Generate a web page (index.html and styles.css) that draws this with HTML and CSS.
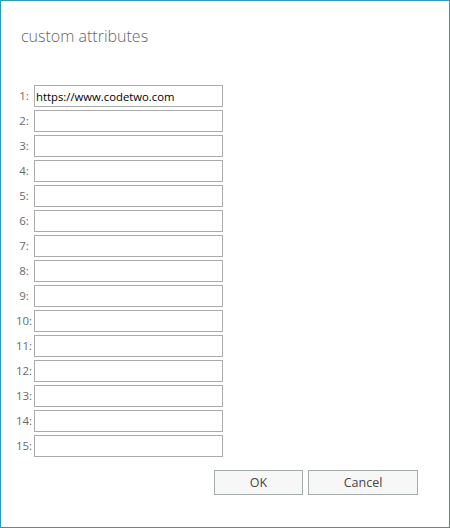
FILE: index.html
```html
<!DOCTYPE html>
<html>
<head>
<meta charset="utf-8">
<link rel="stylesheet" href="styles.css">
</head>
<body>
<div class="dialog">
  <h1 class="title">custom attributes</h1>
  <div class="fields">
    <label class="lbl">1:</label><input class="field" type="text" value="https://www.codetwo.com">
    <label class="lbl">2:</label><input class="field" type="text">
    <label class="lbl">3:</label><input class="field" type="text">
    <label class="lbl">4:</label><input class="field" type="text">
    <label class="lbl">5:</label><input class="field" type="text">
    <label class="lbl">6:</label><input class="field" type="text">
    <label class="lbl">7:</label><input class="field" type="text">
    <label class="lbl">8:</label><input class="field" type="text">
    <label class="lbl">9:</label><input class="field" type="text">
    <label class="lbl">10:</label><input class="field" type="text">
    <label class="lbl">11:</label><input class="field" type="text">
    <label class="lbl">12:</label><input class="field" type="text">
    <label class="lbl">13:</label><input class="field" type="text">
    <label class="lbl">14:</label><input class="field" type="text">
    <label class="lbl">15:</label><input class="field" type="text">
  </div>
  <div class="actions">
    <button class="btn btn-ok">OK</button>
    <button class="btn btn-cancel">Cancel</button>
  </div>
</div>
</body>
</html>
```
FILE: styles.css
```css
html, body {
  margin: 0;
  padding: 0;
  background: #ffffff;
}
.dialog {
  box-sizing: border-box;
  width: 450px;
  height: 528px;
  border: 1px solid #2b9cb6;
  font-family: "Open Sans", "Liberation Sans", sans-serif;
  display: flex;
  flex-direction: column;
}
.title {
  margin: 24px 0 0 20px;
  font-size: 16px;
  line-height: 22px;
  font-weight: 300;
  color: #666666;
}
.fields {
  margin-top: 38px;
  display: grid;
  grid-template-columns: 20px 189px;
  padding-left: 13px;
  row-gap: 3px;
}
.lbl {
  font-size: 11.5px;
  line-height: 22px;
  color: #6a6a6a;
  text-align: center;
  white-space: nowrap;
}
.field {
  box-sizing: border-box;
  width: 189px;
  height: 22px;
  margin: 0;
  border: 1px solid #ababab;
  padding: 0 0 0 1px;
  font-family: "Open Sans", "Liberation Sans", sans-serif;
  font-size: 11.3px;
  color: #000000;
  background: #ffffff;
  outline: none;
}
.actions {
  margin-top: 13px;
  display: flex;
  justify-content: flex-end;
  gap: 5px;
  padding-right: 31px;
}
.btn {
  box-sizing: border-box;
  height: 25px;
  margin: 0;
  border: 1px solid #a3abab;
  background: #f7f7f7;
  font-family: "Open Sans", "Liberation Sans", sans-serif;
  font-size: 12.5px;
  color: #444444;
  padding: 0;
}
.btn-ok { width: 89px; }
.btn-cancel { width: 110px; }
```
